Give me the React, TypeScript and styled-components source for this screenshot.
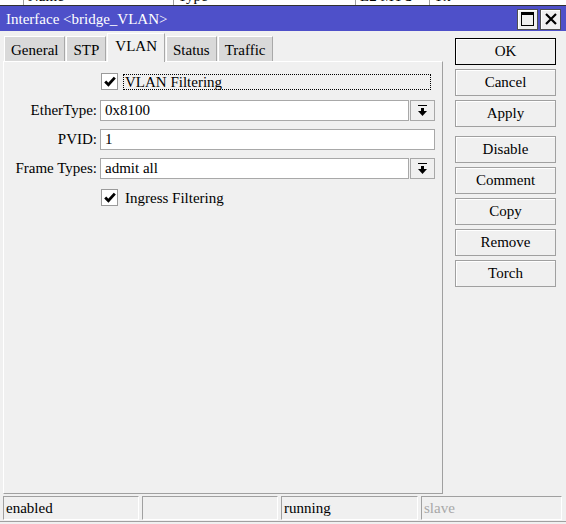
import styled, { createGlobalStyle } from "styled-components"

const GlobalStyle = createGlobalStyle`
    html, body {
        margin: 0;
        padding: 0;
    }
    body {
        width: 566px;
        height: 524px;
        overflow: hidden;
        background: #f0f0f0;
        font-family: "Liberation Serif", "Times New Roman", serif;
        font-size: 15px;
        color: #000;
    }
    * {
        box-sizing: border-box;
    }
`

const Page = styled.div`
    width: 566px;
    height: 524px;
    display: flex;
    flex-direction: column;
    overflow: hidden;
    background: #f0f0f0;
`

/* the list window behind the dialog, only its lowest pixels show */
const BackList = styled.div`
    height: 5px;
    flex-shrink: 0;
    display: flex;
    background: #fff;
    overflow: hidden;
`

const BackCol = styled.div<{ $w: number }>`
    width: ${({ $w }) => $w}px;
    flex-shrink: 0;
    border-right: 1px solid #a0a0a0;
    padding-left: 4px;
    line-height: 16px;
    color: #000;
    white-space: nowrap;

    span {
        display: block;
        margin-top: -12px;
    }
`

const Window = styled.div`
    display: flex;
    flex-direction: column;
    border-top: 1px solid #303030;
    border-bottom: 1px solid #a0a0a0;
    padding-bottom: 1px;
    background: #f0f0f0;
`

const TitleBar = styled.div`
    height: 25px;
    display: flex;
    align-items: center;
    justify-content: space-between;
    padding: 0 5px 0 6px;
    background: #4e50c9;
    color: #fff;
`

const Title = styled.div`
    font-size: 15px;
    padding-top: 1px;
`

const TitleButtons = styled.div`
    display: flex;
    gap: 2px;
    padding-top: 1px;
`

const TitleButton = styled.div`
    width: 21px;
    height: 21px;
    display: flex;
    align-items: center;
    justify-content: center;
    background: #f0f0f0;
    border: 1px solid #505050;
    box-shadow: inset 1px 1px 0 #fff;
`

const Main = styled.div`
    height: 463px;
    display: flex;
`

const LeftSide = styled.div`
    width: 443px;
    padding-left: 3px;
    display: flex;
    flex-direction: column;
`

const Tabs = styled.div`
    height: 30px;
    display: flex;
    align-items: flex-end;
    gap: 1px;
    padding-left: 1px;
`

const Tab = styled.div<{ $active?: boolean }>`
    height: ${({ $active }) => ($active ? 29 : 25)}px;
    padding: ${({ $active }) => ($active ? "2px 7px 0" : "3px 6px 0")};
    margin-bottom: ${({ $active }) => ($active ? "-1px" : "0")};
    position: relative;
    z-index: ${({ $active }) => ($active ? 1 : 0)};
    background: ${({ $active }) => ($active ? "#f0f0f0" : "#d9d9d9")};
    border-top: 1px solid #fff;
    border-left: 1px solid #fff;
    border-right: 1px solid #a8a8a8;
    font-size: 15px;
    line-height: 20px;
    white-space: nowrap;
`

const Panel = styled.div`
    flex: 1;
    background: #f0f0f0;
    border-top: 1px solid #fff;
    border-left: 1px solid #fff;
    border-right: 1px solid #a0a0a0;
    border-bottom: 1px solid #a0a0a0;
    padding: 9px 7px 0 0;
    display: flex;
    flex-direction: column;
    gap: 8px;
`

const Row = styled.div`
    height: 21px;
    display: flex;
    align-items: center;
`

const Label = styled.div`
    width: 93px;
    flex-shrink: 0;
    margin-right: 3px;
    text-align: right;
    white-space: nowrap;
`

const CheckBox = styled.div`
    width: 17px;
    height: 17px;
    flex-shrink: 0;
    margin-left: 1px;
    display: flex;
    align-items: center;
    justify-content: center;
    background: #fff;
    border: 1px solid #9a9a9a;
`

const CheckLabel = styled.div<{ $focused?: boolean }>`
    flex: 1;
    height: 16px;
    margin: 0 4px 0 5px;
    padding-left: 1px;
    line-height: 14px;
    border: 1px dotted ${({ $focused }) => ($focused ? "#000" : "transparent")};
    white-space: nowrap;
`

const Combo = styled.div`
    flex: 1;
    display: flex;
    gap: 1px;
`

const Input = styled.div`
    flex: 1;
    height: 21px;
    padding-left: 4px;
    line-height: 19px;
    background: #fff;
    border: 1px solid #a8a8a8;
    color: #000;
    white-space: nowrap;
`

const DropButton = styled.div`
    width: 25px;
    height: 21px;
    flex-shrink: 0;
    display: flex;
    align-items: center;
    justify-content: center;
    background: #f0f0f0;
    border: 1px solid #a8a8a8;
`

const RightSide = styled.div`
    width: 101px;
    margin-left: 12px;
    padding-top: 7px;
    display: flex;
    flex-direction: column;
    gap: 4px;
`

const Button = styled.div<{ $default?: boolean; $spaced?: boolean }>`
    height: 27px;
    margin-top: ${({ $spaced }) => ($spaced ? "5px" : "0")};
    display: flex;
    align-items: center;
    justify-content: center;
    background: #f0f0f0;
    border: 1px solid ${({ $default }) => ($default ? "#000" : "#a0a0a0")};
    box-shadow: inset 1px 1px 0 #fff;
    font-size: 15px;
`

const StatusBar = styled.div`
    height: 24px;
    margin-top: 2px;
    display: grid;
    grid-template-columns: 136px 136px 137px 1fr;
    gap: 3px;
    padding: 0 4px 0 3px;
`

const StatusCell = styled.div<{ $dim?: boolean }>`
    border-top: 1px solid #a0a0a0;
    border-left: 1px solid #a0a0a0;
    border-bottom: 1px solid #fff;
    border-right: 1px solid #fff;
    padding-left: 2px;
    line-height: 22px;
    color: ${({ $dim }) => ($dim ? "#a8a8a8" : "#000")};
    white-space: nowrap;
    overflow: hidden;
`

const Check = () => (
    <svg width="12" height="11" viewBox="0 0 12 11">
        <path d="M1.2 5.6 L4.4 8.8 L10.8 1.6" fill="none" stroke="#000" strokeWidth="2.8" />
    </svg>
)

const DownArrow = () => (
    <svg width="9" height="12" viewBox="0 0 9 12">
        <rect x="0" y="0" width="9" height="1" fill="#000" />
        <rect x="3" y="3" width="3" height="3" fill="#000" />
        <polygon points="0,6 9,6 4.5,11" fill="#000" />
    </svg>
)

const MaxIcon = () => (
    <svg width="13" height="14" viewBox="0 0 13 14">
        <rect x="0.5" y="0.5" width="12" height="13" fill="none" stroke="#000" />
        <rect x="0" y="0" width="13" height="3" fill="#000" />
    </svg>
)

const CloseIcon = () => (
    <svg width="12" height="12" viewBox="0 0 12 12">
        <path d="M1 1 L11 11 M11 1 L1 11" stroke="#000" strokeWidth="2.2" />
    </svg>
)

export default function App() {
    const tabs = ["General", "STP", "VLAN", "Status", "Traffic"]
    const buttons = ["OK", "Cancel", "Apply", "Disable", "Comment", "Copy", "Remove", "Torch"]

    return (
        <Page>
            <GlobalStyle />
            <BackList>
                <BackCol $w={24} />
                <BackCol $w={150}><span>Name</span></BackCol>
                <BackCol $w={182}><span>Type</span></BackCol>
                <BackCol $w={74}><span>L2 MTU</span></BackCol>
                <BackCol $w={140}><span>Tx</span></BackCol>
            </BackList>
            <Window>
                <TitleBar>
                    <Title>Interface &lt;bridge_VLAN&gt;</Title>
                    <TitleButtons>
                        <TitleButton><MaxIcon /></TitleButton>
                        <TitleButton><CloseIcon /></TitleButton>
                    </TitleButtons>
                </TitleBar>
                <Main>
                    <LeftSide>
                        <Tabs>
                            {tabs.map(t => (
                                <Tab key={t} $active={t === "VLAN"}>{t}</Tab>
                            ))}
                        </Tabs>
                        <Panel>
                            <Row>
                                <Label />
                                <CheckBox><Check /></CheckBox>
                                <CheckLabel $focused>VLAN Filtering</CheckLabel>
                            </Row>
                            <Row>
                                <Label>EtherType:</Label>
                                <Combo>
                                    <Input>0x8100</Input>
                                    <DropButton><DownArrow /></DropButton>
                                </Combo>
                            </Row>
                            <Row>
                                <Label>PVID:</Label>
                                <Input>1</Input>
                            </Row>
                            <Row>
                                <Label>Frame Types:</Label>
                                <Combo>
                                    <Input>admit all</Input>
                                    <DropButton><DownArrow /></DropButton>
                                </Combo>
                            </Row>
                            <Row>
                                <Label />
                                <CheckBox><Check /></CheckBox>
                                <CheckLabel>Ingress Filtering</CheckLabel>
                            </Row>
                        </Panel>
                    </LeftSide>
                    <RightSide>
                        {buttons.map(b => (
                            <Button key={b} $default={b === "OK"} $spaced={b === "Disable"}>{b}</Button>
                        ))}
                    </RightSide>
                </Main>
                <StatusBar>
                    <StatusCell>enabled</StatusCell>
                    <StatusCell />
                    <StatusCell>running</StatusCell>
                    <StatusCell $dim>slave</StatusCell>
                </StatusBar>
            </Window>
        </Page>
    )
}
